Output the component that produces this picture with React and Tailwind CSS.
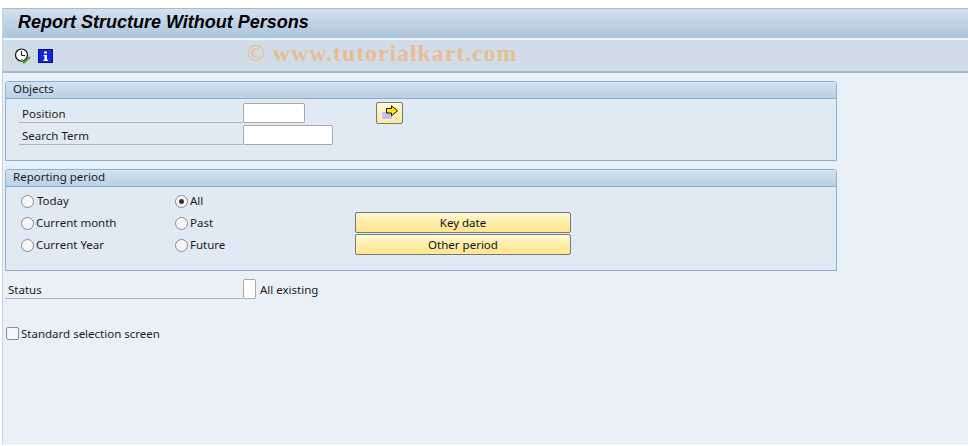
import React from 'react';

const ClockIcon = () => (
  <svg width="17" height="16" viewBox="0 0 17 16">
    <circle cx="7.5" cy="7" r="6" fill="#fff" stroke="#111" strokeWidth="1.2" />
    <path d="M7.5 3V7.4H11" fill="none" stroke="#111" strokeWidth="1" />
    <path d="M7 11.5L10 14.5L16 9" fill="none" stroke="#4f9e34" strokeWidth="2.2" />
  </svg>
);

const InfoIcon = () => (
  <svg width="15" height="14" viewBox="0 0 15 14">
    <rect width="15" height="14" fill="#0b0b8c" />
    <rect x="1" y="1" width="13" height="12" fill="#1226e0" />
    <path d="M6 2.5H9V4.5H6ZM5.5 6H9V10.8H10V12H5.5V10.8H6.5V7.2H5.5Z" fill="#fff" />
  </svg>
);

const ArrowIcon = () => (
  <svg width="18" height="16" viewBox="0 0 18 16">
    <rect x="0.5" y="6.5" width="11" height="8" fill="#cdbfe0" stroke="#f4f0f8" strokeWidth="1" />
    <path d="M5.5 3.5H10.5V0.8L16.5 5.8L10.5 10.8V8H5.5Z" fill="#ffe800" stroke="#111" strokeWidth="1" />
  </svg>
);

const Radio = ({ checked, label, textClass = 'ml-[2px]' }) => (
  <div className="flex items-center h-[22px]">
    <span className="w-[13px] h-[13px] rounded-full border border-[#8c8c8c] bg-[#f4f6f9] flex items-center justify-center shrink-0">
      {checked && <span className="w-[5px] h-[5px] rounded-full bg-[#333]"></span>}
    </span>
    <span className={textClass}>{label}</span>
  </div>
);

const Panel = ({ title, className, children }) => (
  <section className={`ml-[2px] w-[832px] border border-[#8fadcf] rounded-t-[3px] bg-[#dfeaf4] ${className}`}>
    <div className="h-[17px] leading-[14px] pl-[7px] border-b border-[#8fadc9] bg-gradient-to-b from-[#d3e2f1] to-[#b9d0e5]">
      {title}
    </div>
    {children}
  </section>
);

const FieldRow = ({ label, inputClass, children }) => (
  <div className="flex h-[22px]">
    <div className="w-[224px] ml-[13px] h-[20px] pl-[3px] leading-[21px] border-b border-[#b4b4b4]">{label}</div>
    <div className={`h-[20px] bg-white border border-[#a9a9a9] rounded-[2px] ${inputClass}`}></div>
    {children}
  </div>
);

const YellowButton = ({ label }) => (
  <button className="w-[216px] h-[21px] border border-[#77787a] rounded-[2px] text-center leading-[19px] bg-gradient-to-b from-[#fff9d6] via-[#ffeda6] to-[#ffe590] text-[#111]">
    {label}
  </button>
);

export default function App() {
  return (
    <div
      className="relative h-[446px] w-[968px] overflow-hidden bg-white text-[11.5px] text-[#1c1c1c] pl-[2px] pt-[8px]"
      style={{ fontFamily: '"Noto Sans", sans-serif' }}
    >
      <div className="h-[437px] bg-[#e9f0f8] border-l border-[#c6d4e2]">
        {/* Title bar */}
        <header className="h-[32px] border-t border-[#a9b9ca] border-b-2 border-b-[#eef4fa] bg-gradient-to-b from-[#d2e1f0] to-[#acc4dc] pl-[15px] leading-[27px] text-[18px] font-bold italic text-black" style={{ fontFamily: '"Liberation Sans", sans-serif' }}>
          Report Structure Without Persons
        </header>

        {/* Toolbar */}
        <div className="h-[33px] flex items-center gap-[7px] pl-[11px] bg-[#d0dde8] border-b-2 border-[#a6b7cc]">
          <ClockIcon />
          <InfoIcon />
        </div>

        <div className="pt-[8px]">
          <Panel title="Objects" className="h-[80px]">
            <div className="pt-[4px]">
              <FieldRow label="Position" inputClass="w-[62px]">
                <button className="ml-[71px] -mt-[1px] w-[27px] h-[22px] border border-[#77787a] rounded-[2px] bg-gradient-to-b from-[#fff9d6] to-[#ffe79a] flex items-center justify-center">
                  <ArrowIcon />
                </button>
              </FieldRow>
              <FieldRow label="Search Term" inputClass="w-[90px]" />
            </div>
          </Panel>

          <Panel title="Reporting period" className="h-[102px] mt-[8px]">
            <div className="flex pt-[3px] pl-[15px]">
              <div className="w-[154px]">
                <Radio label="Today" textClass="ml-[3px]" />
                <Radio label="Current month" />
                <Radio label="Current Year" />
              </div>
              <div className="w-[180px]">
                <Radio checked label="All" />
                <Radio label="Past" />
                <Radio label="Future" />
              </div>
              <div className="flex flex-col gap-px pt-[22px]">
                <YellowButton label="Key date" />
                <YellowButton label="Other period" />
              </div>
            </div>
          </Panel>

          <div className="flex mt-[8px] ml-[2px] h-[21px]">
            <div className="w-[238px] pl-[3px] leading-[21px] h-[20px] border-b border-[#b4b4b4]">Status</div>
            <div className="w-[13px] h-[20px] bg-white border border-[#a9a9a9] rounded-[2px]"></div>
            <span className="ml-[4px] leading-[21px]">All existing</span>
          </div>

          <div className="flex items-center mt-[25px] ml-[3px]">
            <span className="w-[13px] h-[13px] bg-[#f4f6f9] border border-[#8c8c8c] rounded-[2px]"></span>
            <span className="ml-[2px]">Standard selection screen</span>
          </div>
        </div>
      </div>

      {/* Watermark */}
      <div className="absolute left-[247px] top-[35px] text-[24px] font-bold tracking-[0.9px] text-[#e9bd93] whitespace-nowrap" style={{ fontFamily: '"Liberation Serif", serif' }}>
        © www.tutorialkart.com
      </div>
    </div>
  );
}
